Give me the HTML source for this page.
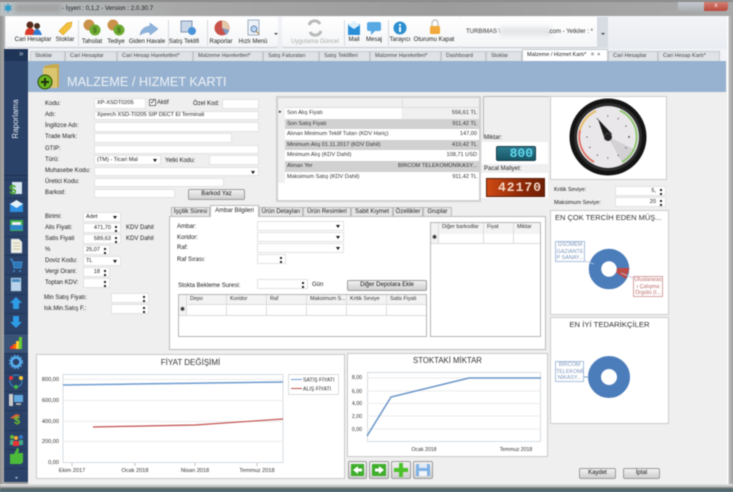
<!DOCTYPE html>
<html><head><meta charset="utf-8"><title>Malzeme / Hizmet Kartı</title>
<style>
html,body{margin:0;padding:0;width:733px;height:492px;overflow:hidden;background:#9a9a9a}
body{font-family:"Liberation Sans",sans-serif;position:relative}
#w{position:absolute;left:0;top:0;width:733px;height:492px;overflow:hidden;filter:blur(.5px)}
.b{position:absolute;box-sizing:border-box}
.l{position:absolute;font-size:6px;line-height:8px;white-space:nowrap;color:#222}
.i{position:absolute;box-sizing:border-box;background:#fff;border:1px solid #e2e2e2;font-size:5.6px;line-height:8px;color:#222;padding-left:2px;white-space:nowrap;overflow:hidden}
.s::after{content:"";position:absolute;right:3px;top:1.5px;width:2px;height:2px;background:#222;box-shadow:0 4px #222}
.d::after{content:"";position:absolute;right:3px;top:3px;border:2px solid transparent;border-top:3px solid #111}
.r{text-align:right;padding-right:9px}
.t{position:absolute;box-sizing:border-box;top:51px;height:10px;background:#dfe3e8;border:1px solid #c4c8cc;border-bottom:0;font-size:5.5px;line-height:9px;color:#444;padding-left:4px;white-space:nowrap;overflow:hidden}
.p{position:absolute;box-sizing:border-box;top:207px;height:9px;background:#e6e6e6;border:1px solid #bbb;border-bottom:0;font-size:6px;line-height:8px;color:#222;text-align:center;white-space:nowrap}
.m{position:absolute;width:60px;text-align:center;top:36px;font-size:6px;line-height:8px;color:#222;white-space:nowrap}
.q{position:absolute;box-sizing:border-box;background:#fff;border:2px solid #d6d6d6}
.c{position:absolute;box-sizing:border-box;font-size:5.4px;line-height:9px;color:#333;white-space:nowrap;overflow:hidden;padding-left:3px;border-right:1px solid #ddd;height:10px}
.btn{position:absolute;box-sizing:border-box;background:linear-gradient(#f2f2f2,#cfcfcf);border:1px solid #9c9c9c;border-radius:2px;font-size:6px;color:#111;text-align:center;white-space:nowrap}
.rw{position:absolute;left:285px;width:194px;height:10.6px;font-size:5.6px;line-height:10px;color:#333}
.rw span{position:absolute;left:2px}.rw b{position:absolute;right:2px;font-weight:normal}
</style></head><body><div id="w">
<!-- window frame -->
<div class="b" style="left:0;top:0;width:733px;height:17px;background:linear-gradient(90deg,#b9c0c3,#a8a8a8 25%,#9c9c9c 60%,#a9a9a9)"></div>
<div class="b" style="left:0;top:0;width:733px;height:2px;background:#8b8b8b"></div>
<div class="b" style="left:0;top:16px;width:5px;height:476px;background:linear-gradient(90deg,#8f8f8f,#b4b4b4)"></div>
<div class="b" style="left:727px;top:16px;width:6px;height:476px;background:linear-gradient(90deg,#fff 0,#fff 20%,#bdbdbd 30%,#a3a3a3)"></div>
<div class="b" style="left:0;top:484px;width:733px;height:8px;background:linear-gradient(#e8e8e8 0,#b8b8b8 35%,#5f6d70 55%,#44666e)"></div>
<div class="l" style="left:15px;top:4px;width:46px;height:8px;background:#a2a2a2;filter:blur(2px)"></div>
<div class="l" style="left:62px;top:4.5px;font-size:6.2px;color:#222">- İşyeri : 0,1,2 - Version : 2.0.30.7</div>
<div class="b" style="left:678px;top:2px;width:50px;height:9px;background:linear-gradient(#c5cbd0,#a9aeb2);border-radius:0 0 3px 3px"></div>
<div class="b" style="left:704px;top:2px;width:24px;height:9px;background:linear-gradient(#d68074,#b94a3c);border-radius:0 0 3px 0;color:#fff;font-size:6px;line-height:8px;text-align:center">x</div>
<!-- toolbar -->
<div class="b" style="left:5px;top:16px;width:722px;height:33px;background:linear-gradient(#f3f4f7,#e9ecf1)"></div>
<div class="b" style="left:6px;top:17px;width:272px;height:31px;background:linear-gradient(#fff,#f4f5f7);border-radius:3px;border-bottom:1px solid #c8ccd2"></div>
<div class="b" style="left:282px;top:17px;width:179px;height:31px;background:linear-gradient(#fff,#f4f5f7);border-radius:3px;border-bottom:1px solid #c8ccd2"></div>
<div class="b" style="left:461px;top:17px;width:136px;height:31px;background:linear-gradient(#fff,#f4f5f7);border-bottom:1px solid #c8ccd2"></div>
<div class="b" style="left:597px;top:17px;width:11px;height:31px;background:#d7dbe2"></div>
<div class="m" style="left:3px">Cari Hesaplar</div><div class="m" style="left:35px">Stoklar</div>
<div class="m" style="left:62px;top:38px">Tahsilat</div><div class="m" style="left:86px;top:38px">Tediye</div>
<div class="m" style="left:117px;top:38px">Giden Havale</div><div class="m" style="left:154px;top:38px">Satış Teklifi</div>
<div class="m" style="left:191px;top:38px">Raporlar</div><div class="m" style="left:223px;top:38px">Hızlı Menü</div>
<div class="m" style="left:285px;top:38px;color:#aaa">Uygulama Güncel</div><div class="m" style="left:324px;top:36px">Mail</div>
<div class="m" style="left:344px;top:36px">Mesaj</div><div class="m" style="left:370px;top:36px">Tarayıcı</div>
<div class="m" style="left:404px;top:36px">Oturumu Kapat</div>
<div class="l" style="left:466px;top:28px;color:#333">TURBIMAS \</div>
<div class="b" style="left:500px;top:27px;width:52px;height:9px;background:#e4e6e9;filter:blur(2px)"></div>
<div class="l" style="left:548px;top:28px;color:#333">.com - Yetkiler : *</div>
<!-- side bar -->
<div class="b" style="left:4px;top:49px;width:24px;height:433px;background:#2b4268"></div>
<div class="b" style="left:4px;top:49px;width:24px;height:12px;background:#1f3558"></div>
<div class="l" style="left:19px;top:50px;color:#bcd;font-size:8px">»</div>
<div class="b" style="left:4px;top:175px;width:24px;height:1px;background:#1b2f4f"></div>
<div class="l" style="left:-5px;top:114px;width:42px;text-align:center;color:#dfe8f2;font-size:8px;line-height:10px;transform:rotate(-90deg)">Raporlama</div>
<!-- main -->
<div class="b" style="left:28px;top:49px;width:699px;height:435px;background:#efefef"></div>
<div class="b" style="left:28px;top:49px;width:699px;height:12px;background:#f1f3f6"></div>
<div class="t" style="left:30px;width:35px">Stoklar</div><div class="t" style="left:65px;width:52px">Cari Hesaplar</div>
<div class="t" style="left:117px;width:76px">Cari Hesap Hareketleri*</div><div class="t" style="left:193px;width:70px">Malzeme Hareketleri*</div>
<div class="t" style="left:263px;width:56px">Satış Faturaları</div><div class="t" style="left:319px;width:51px">Satış Teklifleri</div>
<div class="t" style="left:370px;width:71px">Malzeme Hareketleri*</div><div class="t" style="left:441px;width:45px">Dashboard</div>
<div class="t" style="left:486px;width:36px">Stoklar</div>
<div class="t" style="left:522px;top:49px;height:12px;width:86px;background:#fff;color:#222;line-height:10px">Malzeme / Hizmet Kartı*&nbsp;&nbsp; = &nbsp;×</div>
<div class="t" style="left:608px;width:50px">Cari Hesaplar</div><div class="t" style="left:658px;width:62px">Cari Hesap Kartı*</div>
<div class="b" style="left:28px;top:61px;width:698px;height:31px;background:#97b2d0"></div>
<div class="l" style="left:67px;top:74px;font-size:12.7px;line-height:17px;color:#edf2f7">MALZEME / HIZMET KARTI</div>
<!-- form labels & inputs -->
<div class="l" style="left:45px;top:100px">Kodu:</div><div class="i" style="left:94px;top:98px;width:52px;height:11px;line-height:9px">XP-XSDT0205</div>
<div class="b" style="left:149px;top:99px;width:7px;height:7px;background:#fff;border:1px solid #777;color:#222;font-size:7px;line-height:5px">✓</div>
<div class="l" style="left:157px;top:99px">Aktif</div>
<div class="l" style="left:193px;top:100px">Özel Kod:</div><div class="i" style="left:222px;top:99px;width:37px;height:10px"></div>
<div class="l" style="left:45px;top:111px">Adı:</div><div class="i" style="left:94px;top:111px;width:165px;height:9px;line-height:7px">Xpeech XSD-T0205 SIP DECT El Terminali</div>
<div class="l" style="left:45px;top:122px">İngilizce Adı:</div><div class="i" style="left:94px;top:122px;width:165px;height:10px"></div>
<div class="l" style="left:45px;top:133px">Trade Mark:</div><div class="i" style="left:94px;top:133px;width:138px;height:10px"></div>
<div class="l" style="left:45px;top:145px">GTIP:</div><div class="i" style="left:94px;top:145px;width:165px;height:9px"></div>
<div class="l" style="left:45px;top:156px">Türü:</div><div class="i d" style="left:94px;top:155px;width:67px;height:10px">(TM) - Ticari Mal</div>
<div class="l" style="left:165px;top:157px">Yetki Kodu:</div><div class="i" style="left:209px;top:155px;width:50px;height:10px"></div>
<div class="l" style="left:45px;top:167px">Muhasebe Kodu:</div><div class="i d" style="left:94px;top:167px;width:165px;height:9px"></div>
<div class="l" style="left:45px;top:178px">Üretici Kodu:</div><div class="i" style="left:94px;top:178px;width:130px;height:9px"></div>
<div class="l" style="left:45px;top:189px">Barkod:</div><div class="i" style="left:94px;top:189px;width:81px;height:9px"></div>
<div class="btn" style="left:188px;top:189px;width:57px;height:11px;line-height:9px">Barkod Yaz</div>

<div class="l" style="left:45px;top:213px">Birimi:</div><div class="i d" style="left:83px;top:212px;width:38px;height:10px">Adet</div>
<div class="l" style="left:45px;top:224px">Alis Fiyati:</div><div class="i s r" style="left:83px;top:223px;width:38px;height:10px">471,70</div><div class="l" style="left:126px;top:224px">KDV Dahil</div>
<div class="l" style="left:45px;top:235px">Satis Fiyati</div><div class="i s r" style="left:83px;top:234px;width:38px;height:10px">589,63</div><div class="l" style="left:126px;top:235px">KDV Dahil</div>
<div class="l" style="left:45px;top:246px">%</div><div class="i s r" style="left:83px;top:245px;width:27px;height:10px">25,07</div>
<div class="l" style="left:45px;top:257px">Doviz Kodu:</div><div class="i d" style="left:83px;top:256px;width:38px;height:10px">TL</div>
<div class="l" style="left:45px;top:268px">Vergi Orani:</div><div class="i s r" style="left:83px;top:267px;width:27px;height:10px">18</div>
<div class="l" style="left:45px;top:279px">Toptan KDV:</div><div class="i s" style="left:83px;top:278px;width:27px;height:10px"></div>
<div class="l" style="left:44px;top:294px">Min Satış Fiyatı:</div><div class="i s" style="left:111px;top:293px;width:38px;height:10px"></div>
<div class="l" style="left:44px;top:305px">Isk.Min.Satış F.:</div><div class="i s" style="left:111px;top:304px;width:38px;height:10px"></div>

<!-- price grid -->
<div class="b" style="left:276px;top:96px;width:205px;height:106px;background:#fff;border:2px solid #d0d0d0"></div>
<div class="b" style="left:278px;top:98px;width:201px;height:10px;background:#f0f0f0;border-bottom:1px solid #ddd"></div>
<div class="b" style="left:278px;top:98px;width:7px;height:85px;background:#f0f0f0"></div>
<div class="b" style="left:402px;top:98px;width:1px;height:10px;background:#ddd"></div>
<div class="l" style="left:279px;top:108px;font-size:5px">▸</div>
<div class="rw" style="top:108px;background:linear-gradient(90deg,#fff 60%,#f0f0f0 60%)"><span>Son Alış Fiyatı</span><b>556,61 TL</b></div>
<div class="rw" style="top:118.6px;background:#d1d1d1"><span>Son Satış Fiyatı</span><b>911,42 TL</b></div>
<div class="rw" style="top:129.2px"><span>Alınan Minimum Teklif Tutarı (KDV Hariç)</span><b>147,00</b></div>
<div class="rw" style="top:139.8px;background:#d1d1d1"><span>Minimum Alış 01.11.2017 (KDV Dahil)</span><b>410,42 TL</b></div>
<div class="rw" style="top:150.4px"><span>Minimum Alış (KDV Dahil)</span><b>108,71 USD</b></div>
<div class="rw" style="top:161px;background:#d1d1d1"><span>Alınan Yer</span><b>BİRCOM TELEKOMÜNİKASY...</b></div>
<div class="rw" style="top:171.6px"><span>Maksimum Satış (KDV Dahil)</span><b>911,42 TL</b></div>
<!-- LCD -->
<div class="b" style="left:483px;top:96px;width:67px;height:43px;background:#efefef;border:1px solid #b9b9b9;border-right:1px solid #efefef;border-bottom:1px solid #efefef"></div>
<div class="l" style="left:484px;top:134px">Miktar:</div>
<div class="b" style="left:482px;top:142px;width:66px;height:22px;background:#fff"></div>
<div class="b" style="left:496px;top:146px;width:40px;height:15px;background:linear-gradient(#2f7c90,#175665);border:1px solid #143c47;border-radius:2px;color:#5fd8ee;font:bold 13px/13px 'Liberation Mono',monospace;text-align:right;padding-right:2px">800</div>
<div class="l" style="left:484px;top:165px">Pacal Maliyet:</div>
<div class="b" style="left:481px;top:173px;width:67px;height:25px;background:#fff"></div>
<div class="b" style="left:486px;top:178px;width:59px;height:19px;background:linear-gradient(90deg,#cf4a13,#8d2807 60%,#6e2006);border:1px solid #5a1e0a;color:#f3d8c5;font:bold 13px/17px 'Liberation Mono',monospace;text-align:right;padding-right:2px;letter-spacing:1px">42170</div>
<!-- gauge panel -->
<div class="q" style="left:550px;top:96px;width:117px;height:84px;border-width:1px;border-color:#ccc"></div>
<div class="l" style="left:554px;top:186px;font-size:5.6px">Kritik Seviye:</div><div class="i s r" style="left:615px;top:186px;width:51px;height:10px">5,</div>
<div class="l" style="left:554px;top:199px;font-size:5.6px">Maksimum Seviye:</div><div class="i s r" style="left:615px;top:197px;width:51px;height:10px">20</div>
<!-- pies -->
<div class="q" style="left:550px;top:210px;width:119px;height:105px;border-width:1px;border-color:#ccc"></div>
<div class="l" style="left:555px;top:213px;font-size:7.5px;line-height:10px;color:#333">EN ÇOK TERCİH EDEN MÜŞ...</div>
<div class="q" style="left:550px;top:317px;width:119px;height:107px;border-width:1px;border-color:#ccc"></div>
<div class="l" style="left:550px;top:320px;width:119px;text-align:center;font-size:7.7px;line-height:10px;color:#333">EN İYİ TEDARİKÇİLER</div>
<div class="b" style="left:555px;top:241px;width:30px;height:21px;background:#fff;border:1px solid #a9bfdc;color:#7b97bd;font-size:5.4px;line-height:6.6px;text-align:center">GSOMEM GAZIANTE P SANAY...</div>
<div class="b" style="left:633px;top:276px;width:30px;height:21px;background:#fff;border:1px solid #d4a2a0;color:#b66;font-size:5.4px;line-height:6.6px;text-align:center">Uluslararas ı Çalışma Örgütü (I...</div>
<div class="b" style="left:555px;top:361px;width:29px;height:21px;background:#fff;border:1px solid #a9bfdc;color:#7b97bd;font-size:5.4px;line-height:6.6px;text-align:center">BİRCOM TELEKOMİ NİKASY...</div>
<!-- tabs -->
<div class="b" style="left:169px;top:216px;width:377px;height:134px;background:#fff;border:1px solid #bbb"></div>
<div class="p" style="left:171px;width:39px">İşçilik Süresi</div>
<div class="p" style="left:210px;width:49px;top:205px;height:12px;background:#fff;border-color:#bbb;line-height:10px;z-index:2">Ambar Bilgileri</div>
<div class="p" style="left:259px;width:44px">Ürün Detayları</div><div class="p" style="left:303px;width:48px">Ürün Resimleri</div>
<div class="p" style="left:351px;width:42px">Sabit Kıymet</div><div class="p" style="left:393px;width:30px">Özellikler</div><div class="p" style="left:423px;width:29px">Gruplar</div>
<div class="l" style="left:177px;top:223px">Ambar:</div><div class="i d" style="left:257px;top:221px;width:87px;height:10px"></div>
<div class="l" style="left:177px;top:234px">Koridor:</div><div class="i d" style="left:257px;top:232px;width:87px;height:10px"></div>
<div class="l" style="left:177px;top:244px">Raf:</div><div class="i d" style="left:257px;top:243px;width:87px;height:10px"></div>
<div class="l" style="left:177px;top:256px">Raf Sırası:</div><div class="i s" style="left:257px;top:254px;width:29px;height:10px"></div>
<div class="l" style="left:178px;top:282px">Stokta Bekleme Suresi:</div><div class="i s" style="left:257px;top:279px;width:51px;height:10px"></div>
<div class="l" style="left:312px;top:281px">Gün</div>
<div class="btn" style="left:347px;top:280px;width:80px;height:11px;line-height:9px">Diğer Depolara Ekle</div>
<!-- grid 1 -->
<div class="b" style="left:178px;top:294px;width:249px;height:43px;background:#fff;border:1px solid #b5b5b5"></div>
<div class="b" style="left:179px;top:295px;width:247px;height:10px;background:#f3f3f3;border-bottom:1px solid #ddd"></div>
<div class="c" style="left:179px;top:295px;width:8px;background:#f3f3f3;height:21px;padding:0"></div>
<div class="l" style="left:180px;top:306px;font-size:6px">✱</div>
<div class="c" style="left:187px;top:295px;width:40px;height:21px">Depo</div><div class="c" style="left:227px;top:295px;width:40px;height:21px">Koridor</div>
<div class="c" style="left:267px;top:295px;width:40px;height:21px">Raf</div><div class="c" style="left:307px;top:295px;width:40px;height:21px">Maksimum S...</div>
<div class="c" style="left:347px;top:295px;width:40px;height:21px">Kritik Seviye</div><div class="c" style="left:387px;top:295px;width:39px;height:21px;border:0">Satis Fiyati</div>
<div class="b" style="left:179px;top:315px;width:247px;height:1px;background:#ddd"></div>
<!-- grid 2 -->
<div class="b" style="left:430px;top:222px;width:111px;height:115px;background:#fff;border:1px solid #b5b5b5"></div>
<div class="b" style="left:431px;top:223px;width:109px;height:11px;background:#f3f3f3"></div>
<div class="c" style="left:431px;top:223px;width:8px;height:21px;background:#f3f3f3;padding:0"></div>
<div class="l" style="left:432px;top:234px">✱</div>
<div class="c" style="left:439px;top:223px;width:45px;height:21px">Diğer barkodlar</div><div class="c" style="left:484px;top:223px;width:30px;height:21px">Fiyat</div>
<div class="c" style="left:514px;top:223px;width:26px;height:21px;border:0">Miktar</div>
<div class="b" style="left:431px;top:243px;width:109px;height:1px;background:#ddd"></div>
<!-- charts bg -->
<div class="q" style="left:36px;top:354px;width:309px;height:125px;border-width:1px;border-color:#c8c8c8"></div>
<div class="q" style="left:347px;top:353px;width:201px;height:104px;border-width:1px;border-color:#c8c8c8"></div>
<div class="l" style="left:36px;top:358px;width:309px;text-align:center;font-size:8px;line-height:10px;color:#333">FİYAT DEĞİŞİMİ</div>
<div class="l" style="left:347px;top:356px;width:201px;text-align:center;font-size:7.8px;line-height:9px;color:#333">STOKTAKİ MİKTAR</div>
<div class="btn" style="left:579px;top:468px;width:37px;height:11px;line-height:9px">Kaydet</div>
<div class="btn" style="left:623px;top:468px;width:37px;height:11px;line-height:9px">İptal</div>
<div class="btn" style="left:348px;top:461px;width:19px;height:18px"></div><div class="btn" style="left:369px;top:461px;width:20px;height:18px"></div>
<div class="btn" style="left:391px;top:461px;width:20px;height:18px"></div><div class="btn" style="left:413px;top:461px;width:20px;height:18px"></div>

<svg width="733" height="492" viewBox="0 0 733 492" style="position:absolute;left:0;top:0" font-family="Liberation Sans, sans-serif">
<!-- title icon -->
<path d="M8 4v8M4.500 6l7 4M11.500 6l-7 4" stroke="#2b9ac9" stroke-width="1.800" fill="none"/>
<!-- toolbar icons -->
<circle cx="30" cy="25" r="3.500" fill="#5a2c1c"/><path d="M25 35q0-7 5-7t5 7z" fill="#d93a2b"/><circle cx="37" cy="26" r="3" fill="#4a3020"/><path d="M33 35q1-6 4-6t5 6z" fill="#2f7bd0"/>
<path d="M59 31l8-8 5-1-1 5-8 8z" fill="#f3c23d" stroke="#d79a1b" stroke-width=".6"/>
<circle cx="89" cy="25" r="5.500" fill="#c9924b"/><circle cx="95" cy="30" r="5.500" fill="#6eaa33"/><text x="95" y="32.500" font-size="7" text-anchor="middle" fill="#2f5f12">$</text>
<circle cx="113" cy="25" r="5.500" fill="#c9924b"/><circle cx="119" cy="30" r="5.500" fill="#6eaa33"/><text x="119" y="32.500" font-size="7" text-anchor="middle" fill="#2f5f12">$</text>
<path d="M140 35q1-8 10-9v-3l8 6-8 6v-3q-6 0-10 3z" fill="#8fb4dc" stroke="#6f95c0" stroke-width=".5"/>
<rect x="181" y="21" width="11" height="11" fill="#c9d6e6" stroke="#7f96b3"/><circle cx="192" cy="31" r="4" fill="#4a93d9"/>
<circle cx="222" cy="28" r="7.500" fill="#c8524a"/><path d="M222 28V20.500A7.500 7.500 0 0 1 229 30z" fill="#e2c9a8"/><path d="M222 28l7 2a7.500 7.500 0 0 1-3 5z" fill="#7f9dc4"/>
<rect x="248" y="20" width="11" height="15" fill="#eef2f7" stroke="#9fb0c6"/><circle cx="254" cy="29" r="3" fill="#bcd5ef" stroke="#5f86b5"/><path d="M256 31l3 3" stroke="#b9893f" stroke-width="1.200"/>
<path d="M309 25a6 6 0 0 1 11-1M321 31a6 6 0 0 1-11 1" stroke="#b9b9b9" stroke-width="3" fill="none"/>
<rect x="348" y="24" width="12" height="11" fill="#2b8fd8"/><path d="M348 25l6-4 6 4-6 4z" fill="#dff0fb"/>
<rect x="367" y="22" width="14" height="9" rx="2" fill="#58a9e3"/><path d="M371 31v4l4-4z" fill="#58a9e3"/>
<circle cx="400" cy="28" r="6.500" fill="#2b8fd0"/><rect x="399" y="27" width="2" height="5" fill="#fff"/><rect x="399" y="24" width="2" height="2" fill="#fff"/>
<rect x="430" y="26" width="10" height="8" rx="1" fill="#f2a93b"/><path d="M432 26v-3a3 3 0 0 1 6 0v3" stroke="#c2c2c2" stroke-width="1.400" fill="none"/>
<!-- separators -->
<path d="M78.500 20v26M168.500 20v26M207.500 20v26M344.500 20v26M388.500 20v26" stroke="#d6dae0"/>
<path d="M274 33l2 2 2-2z" fill="#444"/><path d="M601 33l2 2 2-2z" fill="#444"/>
<!-- folder icon -->
<path d="M44 66l9-2h6v23H47z" fill="#c9a94d"/><path d="M43 68h14v20H43z" fill="#dcc56f"/><circle cx="45" cy="82" r="7" fill="#6cb51f" stroke="#27470d"/><path d="M45 78v8M41 82h8" stroke="#1c2f0b" stroke-width="2"/>
<!-- sidebar -->
<g stroke="#1d3253" stroke-width=".7"><path d="M4 179.500h24M4 198.500h24M4 217.500h24M4 236.500h24M4 255.500h24M4 274.500h24M4 294.500h24M4 313.500h24M4 333.500h24M4 353.500h24M4 372.500h24M4 391.500h24M4 410.500h24M4 430.500h24M4 449.500h24M4 468.500h24"/></g>
<rect x="4" y="334" width="24" height="19" fill="#3a5377"/>
<rect x="12" y="182" width="10" height="12" fill="#d8e6f2"/><text x="9" y="194" font-size="13" font-weight="bold" fill="#4aa52b">$</text>
<rect x="10" y="203" width="13" height="9" fill="#2d8fe0"/><path d="M10 204l6.500-4 6.500 4-6.500 4z" fill="#e4f2fb"/>
<rect x="10" y="220" width="13" height="11" fill="#36b24a"/><rect x="10" y="225" width="13" height="5" fill="#2e86c8"/><rect x="12" y="222" width="9" height="3" fill="#eee"/>
<path d="M11 239h8l3 3v11H11z" fill="#eef0e6" stroke="#a9b7c7" stroke-width=".5"/><path d="M13 243h7M13 246h7M13 249h7" stroke="#c5b48b" stroke-width=".7"/>
<path d="M10 259h2l2 9h7l1-6H12" stroke="#3c8fd0" fill="#2f78b8" stroke-width="1"/><circle cx="14" cy="271" r="1" fill="#3c8fd0"/><circle cx="20" cy="271" r="1" fill="#3c8fd0"/>
<rect x="11" y="278" width="10" height="13" fill="#b9d4ea" stroke="#8fb0cc" stroke-width=".5"/><rect x="12" y="279" width="8" height="3" fill="#4a8cc2"/>
<path d="M16 297l6 6h-3v6h-6v-6h-3z" fill="#2f9ce8"/><path d="M16 328l6-6h-3v-6h-6v6h-3z" fill="#2f9ce8"/>
<path d="M10 346h3v3h-3z" fill="#e33"/><path d="M13 344h3v5h-3z" fill="#f60"/><path d="M16 341h3v8h-3z" fill="#fc3"/><path d="M19 337h3v12h-3z" fill="#6c3"/>
<circle cx="16" cy="362" r="4.500" fill="none" stroke="#58aef0" stroke-width="2.500"/><circle cx="16" cy="362" r="6.500" fill="none" stroke="#58aef0" stroke-width="1" stroke-dasharray="2 1.500"/>
<circle cx="16" cy="381" r="6" fill="none" stroke="#3a8ac8"/><circle cx="11" cy="378" r="2" fill="#e33"/><circle cx="21" cy="378" r="2" fill="#fc3"/><circle cx="16" cy="387" r="2" fill="#4b4"/>
<rect x="9" y="394" width="4" height="12" fill="#ccc"/><rect x="14" y="395" width="9" height="7" fill="#5fa9e0"/><rect x="16" y="403" width="5" height="2" fill="#aaa"/>
<path d="M10 418l6-4 4 1-3 4z" fill="#d9623a"/><text x="14" y="424" font-size="11" font-weight="bold" fill="#6bc22f">$</text>
<circle cx="12" cy="437" r="2" fill="#6b3"/><circle cx="21" cy="437" r="2" fill="#37c"/><circle cx="16" cy="438" r="2" fill="#fa3"/><path d="M10 445v-5h4v5zM19 445v-5h4v5z" fill="#4a8"/><path d="M13 446v-5h6v5z" fill="#e33"/>
<path d="M10 454h4v10h-4zM14 454l3-6q2 0 2 2l-1 3h5v9l-2 2h-7z" fill="#4dbb3a"/>
<path d="M15 477l1.500 2 1.500-2z" fill="#bcd"/>
<!-- gauge -->
<circle cx="608" cy="137" r="38.500" fill="#141414"/><circle cx="608" cy="137" r="34" fill="#2c2c2c"/><circle cx="608" cy="137" r="31" fill="#e9e7e9"/>
<path d="M608 137L623 164A31 31 0 0 0 636 150z" fill="#d3d1d3"/>
<path d="M594 162A29 29 0 0 1 580 130" stroke="#de6f62" stroke-width="1.800" fill="none"/><path d="M580 130A29 29 0 0 1 596 111" stroke="#e8b95a" stroke-width="1.800" fill="none"/><path d="M620 110.500A29 29 0 0 1 622 162" stroke="#8ac46a" stroke-width="1.800" fill="none"/>
<circle cx="608" cy="137" r="21" fill="none" stroke="#555" stroke-width="1.500" stroke-dasharray=".9 10"/>
<path d="M598 119L612 134 605 140z" fill="#1a1a1a"/><circle cx="608" cy="137" r="3.800" fill="#222" stroke="#555" stroke-width=".6"/>
<!-- pie 1 -->
<circle cx="609" cy="269" r="14" fill="none" stroke="#4c7dbb" stroke-width="12.500"/>
<path d="M617 268L629.500 268 626 279 616.500 273Z" fill="#bd4a46"/>
<path d="M585 261l9 3M621 273l12 5" stroke="#b5c6dc" stroke-width=".8"/>
<!-- pie 2 -->
<circle cx="609" cy="377" r="14.500" fill="none" stroke="#4c7dbb" stroke-width="13"/>
<path d="M584 377h5" stroke="#7f9fc8"/>
<!-- chart 1 -->
<rect x="63" y="374.500" width="220" height="88" fill="#fff" stroke="#d8dde2"/>
<path d="M63 379.500h220M63 400.500h220M63 421.500h220M63 441.500h220" stroke="#ececec"/>
<path d="M63 385L283 382" stroke="#6f9bd0" stroke-width="1.500" fill="none"/>
<path d="M93 427L195 425 283 419" stroke="#c0504d" stroke-width="1.200" fill="none"/>
<path d="M72 463v3M135 463v3M195 463v3M257 463v3" stroke="#999" stroke-width=".6"/>
<g font-size="5.600" fill="#333" text-anchor="end"><text x="59" y="381">800,00</text><text x="59" y="402">600,00</text><text x="59" y="423">400,00</text><text x="59" y="443">200,00</text><text x="59" y="464">0,00</text></g>
<g font-size="5.600" fill="#333" text-anchor="middle"><text x="72" y="472">Ekim 2017</text><text x="135" y="472">Ocak 2018</text><text x="195" y="472">Nisan 2018</text><text x="257" y="472">Temmuz 2018</text></g>
<rect x="288.500" y="374.500" width="50" height="20" fill="#fff" stroke="#ddd"/>
<path d="M291 379.500h11" stroke="#6f9bd0"/><path d="M291 388.500h11" stroke="#c0504d"/>
<g font-size="5.200" fill="#333"><text x="303" y="381.500">SATIŞ FİYATI</text><text x="303" y="390.500">ALIŞ FİYATI</text></g>
<!-- chart 2 -->
<rect x="367.500" y="372.500" width="173" height="69" fill="#fff" stroke="#d8dde2"/>
<path d="M367 378h174M367 391h174M367 403.500h174M367 416h174M367 429h174" stroke="#ececec"/>
<path d="M367 436L391 397 469 378H541" stroke="#6b95c9" stroke-width="1.500" fill="none"/>
<g font-size="5.200" fill="#333" text-anchor="end"><text x="362" y="379">8,00</text><text x="362" y="393">6,00</text><text x="362" y="405">4,00</text><text x="362" y="418">2,00</text><text x="362" y="431">0,00</text></g>
<g font-size="5.200" fill="#333" text-anchor="middle"><text x="424" y="451">Ocak 2018</text><text x="516" y="451">Temmuz 2018</text></g>
<!-- nav buttons -->
<rect x="351" y="464" width="13" height="12" fill="#3fae2c"/><path d="M353 470l5-4v2.500h4v3h-4v2.500z" fill="#fff"/>
<rect x="372" y="464" width="14" height="12" fill="#3fae2c"/><path d="M384 470l-5-4v2.500h-4v3h4v2.500z" fill="#fff"/>
<path d="M399 463h4v5h5v4h-5v5h-4v-5h-5v-4h5z" fill="#4cc22a"/>
<rect x="416" y="464" width="14" height="12" rx="1" fill="#7fb0e4"/><rect x="419" y="464" width="8" height="4" fill="#dfeaf6"/><rect x="419" y="471" width="8" height="5" fill="#f2f6fb"/>
</svg>
</div></body></html>
